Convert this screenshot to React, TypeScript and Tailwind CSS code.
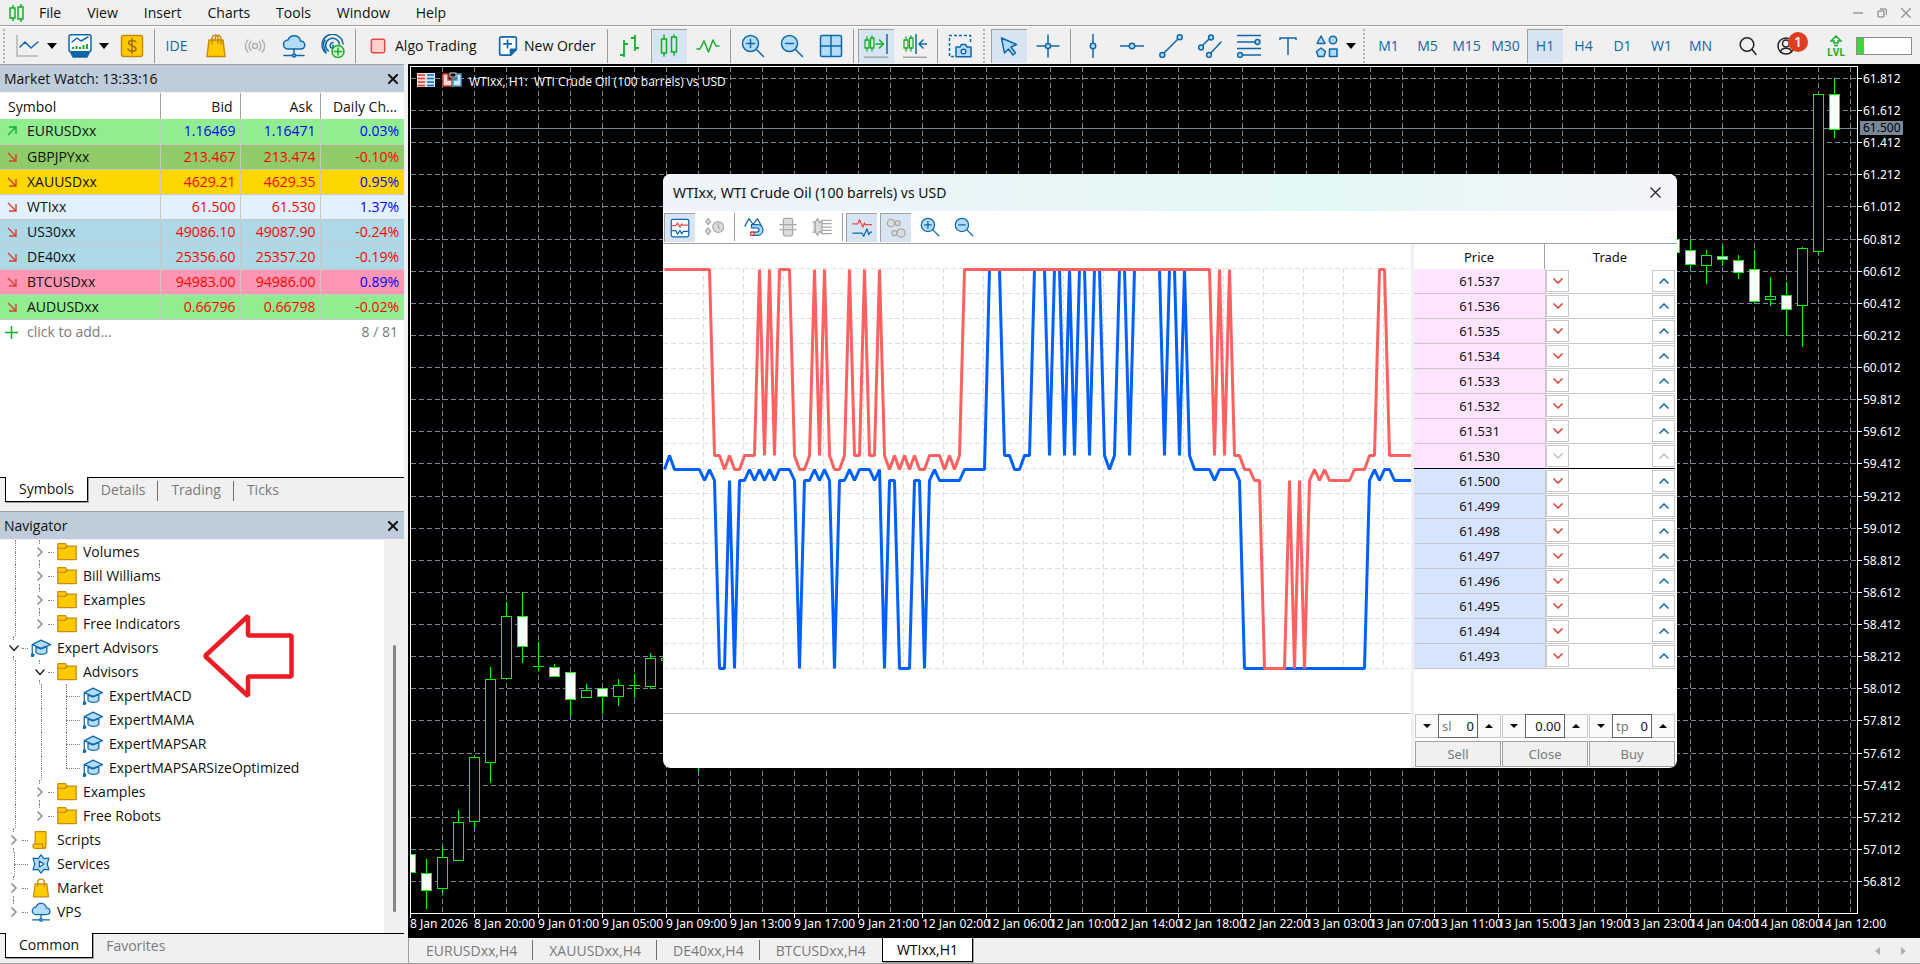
import { type ReactNode } from "react";
import { clsx } from "clsx";

const BLUE = "#0f67ab";
const SKY = "#b3dcfa";
const GREEN = "#12b028";
const GOLD = "#fdcb00";
const GOLD_EDGE = "#c98a0a";
const GRAY = "#a8a8a8";
const LIME = "#00ff00";

const MENU = ["File", "View", "Insert", "Charts", "Tools", "Window", "Help"];

const QUOTES = [
  { symbol: "EURUSDxx", bid: "1.16469", ask: "1.16471", change: "0.03%", up: true, bg: "bg-[#90ee90]" },
  { symbol: "GBPJPYxx", bid: "213.467", ask: "213.474", change: "-0.10%", up: false, bg: "bg-[#8fcb66]" },
  { symbol: "XAUUSDxx", bid: "4629.21", ask: "4629.35", change: "0.95%", up: false, bg: "bg-[#ffd700]" },
  { symbol: "WTIxx", bid: "61.500", ask: "61.530", change: "1.37%", up: false, bg: "bg-[#e1f1ff]" },
  { symbol: "US30xx", bid: "49086.10", ask: "49087.90", change: "-0.24%", up: false, bg: "bg-[#add8e6]" },
  { symbol: "DE40xx", bid: "25356.60", ask: "25357.20", change: "-0.19%", up: false, bg: "bg-[#add8e6]" },
  { symbol: "BTCUSDxx", bid: "94983.00", ask: "94986.00", change: "0.89%", up: false, bg: "bg-[#ff96b4]" },
  { symbol: "AUDUSDxx", bid: "0.66796", ask: "0.66798", change: "-0.02%", up: false, bg: "bg-[#90ee90]" },
];

type Branch = "line" | "tee" | "end" | "closed" | "closedEnd" | "open";
type TreeIcon = "folder" | "expert" | "script" | "service" | "market" | "vps";

const TREE: { label: string; icon: TreeIcon; cells: Branch[] }[] = [
  { label: "Volumes", icon: "folder", cells: ["line", "closed"] },
  { label: "Bill Williams", icon: "folder", cells: ["line", "closed"] },
  { label: "Examples", icon: "folder", cells: ["line", "closed"] },
  { label: "Free Indicators", icon: "folder", cells: ["line", "closedEnd"] },
  { label: "Expert Advisors", icon: "expert", cells: ["open"] },
  { label: "Advisors", icon: "folder", cells: ["line", "open"] },
  { label: "ExpertMACD", icon: "expert", cells: ["line", "line", "tee"] },
  { label: "ExpertMAMA", icon: "expert", cells: ["line", "line", "tee"] },
  { label: "ExpertMAPSAR", icon: "expert", cells: ["line", "line", "tee"] },
  { label: "ExpertMAPSARSizeOptimized", icon: "expert", cells: ["line", "line", "end"] },
  { label: "Examples", icon: "folder", cells: ["line", "closed"] },
  { label: "Free Robots", icon: "folder", cells: ["line", "closedEnd"] },
  { label: "Scripts", icon: "script", cells: ["closed"] },
  { label: "Services", icon: "service", cells: ["tee"] },
  { label: "Market", icon: "market", cells: ["closed"] },
  { label: "VPS", icon: "vps", cells: ["closedEnd"] },
];

const TIMES = [
  "8 Jan 2026", "8 Jan 20:00", "9 Jan 01:00", "9 Jan 05:00", "9 Jan 09:00", "9 Jan 13:00",
  "9 Jan 17:00", "9 Jan 21:00", "12 Jan 02:00", "12 Jan 06:00", "12 Jan 10:00", "12 Jan 14:00",
  "12 Jan 18:00", "12 Jan 22:00", "13 Jan 03:00", "13 Jan 07:00", "13 Jan 11:00", "13 Jan 15:00",
  "13 Jan 19:00", "13 Jan 23:00", "14 Jan 04:00", "14 Jan 08:00", "14 Jan 12:00",
];

// x, high, body top, body bottom, low, bearish
const CANDLES: [number, number, number, number, number, boolean][] = [
  [410, 854, 854, 872, 872, true],
  [426, 859, 873, 890, 908, true],
  [442, 846, 857, 888, 892, false],
  [458, 810, 822, 860, 860, false],
  [474, 757, 757, 821, 827, false],
  [490, 667, 679, 762, 782, false],
  [506, 602, 616, 678, 678, false],
  [522, 592, 616, 646, 662, true],
  [538, 642, 666, 666, 670, false],
  [554, 664, 667, 676, 676, true],
  [570, 672, 672, 699, 715, true],
  [586, 684, 690, 697, 697, false],
  [602, 688, 688, 696, 713, true],
  [618, 679, 685, 696, 705, false],
  [634, 674, 685, 685, 697, false],
  [650, 653, 658, 686, 688, false],
  [666, 658, 658, 660, 662, false],
  [698, 700, 720, 740, 770, false],
  [1674, 236, 239, 252, 252, true],
  [1690, 240, 250, 264, 267, true],
  [1706, 250, 255, 265, 283, false],
  [1722, 245, 256, 259, 265, true],
  [1738, 255, 260, 272, 278, true],
  [1754, 250, 269, 301, 303, true],
  [1770, 277, 296, 299, 305, false],
  [1786, 282, 295, 309, 334, true],
  [1802, 247, 248, 305, 346, false],
  [1818, 94, 94, 251, 253, false],
  [1834, 78, 94, 129, 137, true],
];

// Tick history packed as level + repeat count, one step per tick
const ASK_TICKS =
  "A10 B2 C B C2 B3 A B A B A3 B C2 B A B A B C2 B A B2 A B2 A B C B C B C B C2 B3 C B C B A50 B A B A B2 C2 D2 E5 D E D E D C D C D5 C3 B2 A2 B6";
const BID_TICKS =
  "C B C6 D C D E2 D E D2 C D C D C D C3 D E D2 C D C D E D2 C D C3 D C E D2 E3 D2 E D C D5 C5 A3 B2 C2 B2 A3 B A2 B A B A2 B A2 B C B A2 B A6 B A2 B A B C4 D C4 D E25 D C D C2 D5";
const LEVELS: Record<string, number> = { A: 25.5, B: 211.5, C: 225.5, D: 236.5, E: 424.5 };

const LADDER = [
  "61.537", "61.536", "61.535", "61.534", "61.533", "61.532", "61.531", "61.530",
  "61.500", "61.499", "61.498", "61.497", "61.496", "61.495", "61.494", "61.493",
];

function tickPoints(packed: string) {
  const levels = packed.split(" ").flatMap((run) => Array(Number(run.slice(1) || 1)).fill(run[0]) as string[]);
  return levels.map((level, i) => `${1.5 + i * 5},${LEVELS[level]}`).join(" ");
}

function Icon({ size = 24, children }: { size?: 16 | 20 | 24; children: ReactNode }) {
  return (
    <svg
      viewBox="0 0 24 24"
      aria-hidden="true"
      className={clsx("shrink-0", size === 24 && "size-6", size === 20 && "size-5", size === 16 && "size-4")}
      fill="none"
      stroke={BLUE}
      strokeWidth="1.5"
      strokeLinecap="round"
      strokeLinejoin="round"
    >
      {children}
    </svg>
  );
}

const candlePair = (
  <g stroke={GREEN}>
    <path d="M7 1v4M7 19v3M17 1v2M17 18v3" />
    <rect x="4.500" y="5" width="5" height="14" />
    <rect x="14.500" y="3" width="5" height="15" />
  </g>
);

const smallCandles = (
  <g stroke={GREEN} strokeWidth="1.300">
    <path d="M3 3v3M3 14v3M8 2v2M8 14v3" />
    <rect x="1" y="6" width="4" height="8" />
    <rect x="6.500" y="4" width="3.500" height="10" />
  </g>
);

const ICONS = {
  lineChart: (
    <>
      <path d="M1 1v21h21" stroke="#b4b4b4" strokeLinecap="butt" />
      <path d="M4 13l5-5 6 6 7-6" />
    </>
  ),
  monitor: (
    <>
      <rect x="1" y="0.800" width="22" height="17" rx="2" fill="#fff" />
      <path d="M2.500 18l2.500 5h14l2.500-5z" fill={BLUE} />
      <path d="M4 8l5-4 4 3 7-4" />
      <path d="M5 15v-2M8.500 15v-3M12 15v-2M15.500 15v-4M19 15v-5" stroke={GREEN} strokeWidth="2" strokeLinecap="butt" />
    </>
  ),
  dollar: (
    <>
      <rect x="1.500" y="1.500" width="21" height="21" rx="2" fill={GOLD} stroke={GOLD_EDGE} />
      <path d="M16 8c-1-2-7-2.500-7.500 0.500S16 11.500 16 15s-7 2.500-8 0M12 4.500v15" stroke="#a06c00" />
    </>
  ),
  bag: (
    <g stroke={GOLD_EDGE}>
      <path d="M5 6h14l2 16.500H3z" fill={GOLD} />
      <path d="M8 10V5c0-5 6-5 6-1v5M11 6c0-6 6-6 6-1v5" />
    </g>
  ),
  radio: (
    <g stroke="#b0b0b0">
      <circle cx="12" cy="12" r="2.500" />
      <path d="M8 7.500c-2.500 2-2.500 7 0 9M16 7.500c2.500 2 2.500 7 0 9M5 6c-3.500 3-3.500 9 0 12M19 6c3.500 3 3.500 9 0 12" />
    </g>
  ),
  cloud: (
    <>
      <path d="M6 15a4.500 4.500 0 0 1 0-9 6.500 6.500 0 0 1 12.500 1A4 4 0 0 1 19 15z" fill={SKY} />
      <path d="M12 15v5M2 21.500h20" />
      <circle cx="12" cy="21.500" r="1.500" fill={SKY} />
    </>
  ),
  globe: (
    <>
      <path d="M5 19A10.500 10.500 0 1 1 22 10M7.500 17a7 7 0 1 1 11-7M12 8.500a3 3 0 0 0-1.500 5.500M12 11v4" />
      <path d="M4 6c-3 5-1 9 1 12" />
      <circle cx="17" cy="17.500" r="6" fill="#d8f5d8" stroke={GREEN} />
      <path d="M17 14v7M13.500 17.500h7" stroke={GREEN} />
    </>
  ),
  algo: <rect x="2" y="2" width="20" height="20" rx="2.500" fill="#ffd2cc" stroke="#de4a40" strokeWidth="2.200" />,
  newOrder: (
    <g strokeWidth="2">
      <path d="M4 1h16a2 2 0 0 1 2 2v13l-7 7H4a2 2 0 0 1-2-2V3a2 2 0 0 1 2-2z" fill="#fff" />
      <path d="M22 16h-7v7z" fill={BLUE} />
      <path d="M11.500 5v9M7 9.500h9" />
    </g>
  ),
  bars: <path d="M6 6v17M2 21h4M6 10h4M17 1v16M13 4h4M17 14h4" stroke={GREEN} strokeLinecap="butt" strokeWidth="1.800" />,
  candles: candlePair,
  zigzag: <path d="M1 15h3l4-8 4.500 11 4.500-12 3 6h3" stroke={GREEN} />,
  zoomIn: (
    <>
      <circle cx="9.500" cy="9.500" r="8" fill={SKY} />
      <path d="M15.500 15.500l7 7M5.500 9.500h8M9.500 5.500v8" />
    </>
  ),
  zoomOut: (
    <>
      <circle cx="9.500" cy="9.500" r="8" fill={SKY} />
      <path d="M15.500 15.500l7 7M5.500 9.500h8" />
    </>
  ),
  tiles: (
    <>
      <rect x="1.500" y="1.500" width="21" height="21" rx="1.500" fill={SKY} />
      <path d="M12 1.500v21M1.500 12h21" />
    </>
  ),
  autoScroll: (
    <>
      {smallCandles}
      <path d="M12 10h7M15.500 6l4 4-4 4" stroke={GREEN} />
      <path d="M23 0v20" strokeLinecap="butt" />
      <path d="M0 23.200h24" stroke={GRAY} />
    </>
  ),
  shift: (
    <>
      {smallCandles}
      <path d="M13 0v20" strokeLinecap="butt" />
      <path d="M24 10h-7M20 6l-4 4 4 4" />
      <path d="M0 23.200h24" stroke={GRAY} />
    </>
  ),
  camera: (
    <>
      <path d="M6 22.500H1.500v-21h21V8" strokeDasharray="3 2" strokeLinecap="butt" />
      <path d="M8 13h4l1.500-2.500h4L19 13h4v9.800H8z" fill={SKY} />
      <circle cx="15.500" cy="17.500" r="2.300" fill="#fff" />
    </>
  ),
  cursor: <path d="M4.500 4l15 6.500-5.500 2.500 4.500 6-2.500 2-4.500-6-4 4z" fill={SKY} />,
  crosshair: (
    <>
      <path d="M12 1v8.500M12 14.500V23M1 12h8.500M14.500 12H23" />
      <circle cx="12" cy="12" r="2.500" fill={SKY} />
    </>
  ),
  vline: (
    <>
      <path d="M12 0v24" />
      <circle cx="12" cy="12" r="2.700" fill={SKY} />
    </>
  ),
  hline: (
    <>
      <path d="M0 12h24" />
      <circle cx="12" cy="12" r="2.700" fill={SKY} />
    </>
  ),
  trend: (
    <>
      <path d="M5 19L19 5" />
      <circle cx="3.300" cy="21" r="2.500" fill={SKY} />
      <circle cx="20.700" cy="3.300" r="2.500" fill={SKY} />
    </>
  ),
  channel: (
    <>
      <path d="M4 12l8-8M12 20L23 8" />
      <circle cx="3" cy="13.500" r="2.400" fill={SKY} />
      <circle cx="13" cy="3.500" r="2.400" fill={SKY} />
      <circle cx="11" cy="21" r="2.400" fill={SKY} />
    </>
  ),
  fibo: (
    <>
      <path d="M0 1.500h24M0 8h18M0 14.500h24M5 21h19" />
      <circle cx="20.500" cy="8" r="2.400" fill={SKY} />
      <circle cx="3" cy="21" r="2.400" fill={SKY} />
    </>
  ),
  text: <path d="M4 6V4h16v2M12 4v17" strokeLinecap="butt" />,
  shapes: (
    <>
      <path d="M6 2l4 7.500H2z" fill={SKY} />
      <circle cx="18" cy="6" r="3.700" fill={SKY} />
      <path d="M6 14l4.500 3.500-1.700 5H3.200l-1.700-5z" fill={SKY} />
      <rect x="14.500" y="15" width="7.500" height="7.500" fill={SKY} />
    </>
  ),
  search: (
    <g stroke="#222" strokeWidth="1.500">
      <circle cx="11" cy="10.500" r="6.800" />
      <path d="M16 15.500l4 5" />
    </g>
  ),
  user: (
    <g stroke="#222" strokeWidth="1.500">
      <circle cx="11" cy="12" r="8" />
      <circle cx="11" cy="9.500" r="3.500" />
      <path d="M5.500 18c1-5 10-5 11 0" />
    </g>
  ),
  tickView: (
    <>
      <rect x="1.500" y="1.500" width="21" height="21" rx="2" fill="#fff" />
      <path d="M2 9h5l2-3 3 5 2-4 1 1.500h7" stroke="#f04848" />
      <path d="M2 15h5l2 4.500 3-4.500 2 4 2-3h6" />
    </>
  ),
  clock: (
    <g stroke={GRAY} fill="#dcdcdc">
      <path d="M5 2l3 3.500-3 3.500-3-3.500zM5 13l3 4-3 4-3-4z" />
      <circle cx="17" cy="12" r="6.500" />
      <path d="M17 8v4l2 2" />
    </g>
  ),
  magnet: (
    <>
      <path d="M1 11l5-9 5 7 5-7 5 9" />
      <path d="M9 9h7c9 0 9 13 0 13H9v-4h6c4 0 4-5 0-5H9z" fill={SKY} />
      <rect x="8" y="18" width="4" height="4" fill="#fff" stroke="#d33" />
    </>
  ),
  depth: (
    <g stroke={GRAY}>
      <rect x="6.500" y="1.500" width="11" height="21" rx="2" fill="#dcdcdc" />
      <path d="M2 9h20M2 15h20" />
    </g>
  ),
  volume: (
    <g stroke={GRAY}>
      <path d="M1 6h3l2.500-4 3 5 2.500-3v16l-2.500-3-3 5L4 18H1M4 6v12" fill="#dcdcdc" />
      <path d="M12 4h11M12 8h11M12 12h11M12 16h11M12 20h11" />
    </g>
  ),
  spread: (
    <>
      <path d="M1 7h6l2-5 4 9 2-5 1 2h8" stroke="#f04848" />
      <path d="M1 18h11l2 4 4-9 2 7 2-3h2" />
    </>
  ),
  bubbles: (
    <g stroke={GRAY} fill="#dcdcdc">
      <circle cx="6" cy="6" r="4.500" />
      <circle cx="14" cy="6" r="3" />
      <circle cx="10" cy="18" r="3" />
      <circle cx="18" cy="18" r="5" />
    </g>
  ),
};

type IconName = keyof typeof ICONS;

const TREE_ICONS: Record<TreeIcon, ReactNode> = {
  folder: (
    <g stroke={GOLD_EDGE}>
      <path d="M1 2h9l2 3h11v16H1z" fill={GOLD} />
      <path d="M2 7.500h8l2-2.500" />
    </g>
  ),
  expert: (
    <>
      <path d="M12 2.500L23.500 8 12 12.500 1.500 8z" fill={SKY} />
      <path d="M6 11v6.500c3 3 10 3 13 0V10.500l-7 2.500z" fill={SKY} />
      <path d="M1.500 8v11" />
      <circle cx="1.800" cy="20.500" r="1.600" fill={BLUE} />
    </>
  ),
  script: (
    <g stroke={GOLD_EDGE} fill={GOLD}>
      <path d="M5 2h13v17c0 4-5 4-5 0H5z" />
      <path d="M3 17h11c-1 5 3 5 3 5H5c-3 0-3-4-2-5z" />
    </g>
  ),
  service: (
    <>
      <path d="M12 1l3.500 4.500 6-0.500-2 7 2 7-6-0.500L12 23l-3.500-4.500-6 0.500 2-7-2-7 6 0.500z" fill={SKY} />
      <path d="M10 8.500l5.500 3.500-5.500 3.500z" fill="#fff" />
    </>
  ),
  market: (
    <g stroke={GOLD_EDGE}>
      <path d="M5 7h14l2 15.500H3z" fill={GOLD} />
      <path d="M8 10V5c0-5 8-5 8 0v5" />
    </g>
  ),
  vps: ICONS.cloud,
};

function Separator() {
  return <div className="flex h-[34px] w-[6px] shrink-0 justify-center"><span className="w-px bg-[#9a9a9a]" /></div>;
}

function Grip({ className = "mx-1" }: { className?: string }) {
  return <div className={clsx("h-[34px] w-0 shrink-0 border-l-2 border-dotted border-[#b4b4b4]", className)} />;
}

function ToolButton({ icon, label, active, children }: { icon?: IconName; label: string; active?: boolean; children?: ReactNode }) {
  return (
    <div className="flex w-[39px] shrink-0 justify-center">
      <button
        aria-label={label}
        className={clsx(
          "flex h-[34px] w-9 items-center justify-center",
          active && "border-t border-l border-[#a0a0a0] bg-[#d7e4f2] hover:bg-[#cddded]"
        )}
      >
        {icon ? <Icon>{ICONS[icon]}</Icon> : children}
      </button>
    </div>
  );
}

function DropArrow() {
  return (
    <div className="flex w-[13px] shrink-0">
      <svg viewBox="0 0 10 6" aria-hidden="true" className="h-[6px] w-[10px]">
        <path d="M0 0h10L5 6z" fill="#000" />
      </svg>
    </div>
  );
}

function MenuBar() {
  return (
    <header className="flex h-[26px] shrink-0 items-center border-b border-[#a0a0a0] pr-[9px] pl-2">
      <svg viewBox="0 0 17 18" aria-hidden="true" className="mr-px h-[18px] w-[17px]" fill="#dff5df" stroke={GREEN} strokeWidth="1.500">
        <path d="M5 1v3M5 14v3M13 0v3M13 15v3" />
        <rect x="2" y="4" width="5" height="10" />
        <rect x="10" y="3" width="5" height="12" />
      </svg>
      <nav className="flex">
        {MENU.map((item) => (
          <button key={item} className="px-[13px]">{item}</button>
        ))}
      </nav>
      <div className="ml-auto flex items-center gap-[14px]">
        <button aria-label="Minimize"><svg viewBox="0 0 10 10" className="size-[10px]" stroke="#9a9a9a" strokeWidth="1.500"><path d="M0 5h10" /></svg></button>
        <button aria-label="Restore">
          <svg viewBox="0 0 10 10" className="size-[10px]" fill="none" stroke="#9a9a9a" strokeWidth="1.500">
            <rect x="1" y="3" width="6" height="6" rx="1" />
            <path d="M3 1h4.500a2 2 0 0 1 2 2v4" />
          </svg>
        </button>
        <button aria-label="Close"><svg viewBox="0 0 10 10" className="size-[10px]" stroke="#9a9a9a" strokeWidth="1.500"><path d="M0 0l10 10M10 0L0 10" /></svg></button>
      </div>
    </header>
  );
}

const FRAMES = ["M1", "M5", "M15", "M30", "H1", "H4", "D1", "W1", "MN"];

function Toolbar() {
  return (
    <div className="flex h-[38px] shrink-0 items-center overflow-hidden border-t border-white">
      <Grip className="mx-[3px]" />
      <ToolButton icon="lineChart" label="Line chart" />
      <DropArrow />
      <ToolButton icon="monitor" label="Chart templates" />
      <DropArrow />
      <ToolButton icon="dollar" label="Symbols" />
      <Separator />
      <ToolButton label="MetaEditor"><span className="text-[#0f67ab]">IDE</span></ToolButton>
      <ToolButton icon="bag" label="Market" />
      <ToolButton icon="radio" label="Signals" />
      <ToolButton icon="cloud" label="VPS" />
      <ToolButton icon="globe" label="Community" />
      <Separator />
      <button className="flex w-[132px] shrink-0 items-center gap-[9px] pl-3 whitespace-nowrap"><Icon size={16}>{ICONS.algo}</Icon>Algo Trading</button>
      <button className="flex w-[114px] shrink-0 items-center gap-[6px] pl-2 whitespace-nowrap"><Icon size={20}>{ICONS.newOrder}</Icon>New Order</button>
      <Separator />
      <ToolButton icon="bars" label="Bar chart" />
      <ToolButton icon="candles" label="Candlesticks" active />
      <ToolButton icon="zigzag" label="Line" />
      <Separator />
      <ToolButton icon="zoomIn" label="Zoom in" />
      <ToolButton icon="zoomOut" label="Zoom out" />
      <ToolButton icon="tiles" label="Tile windows" />
      <Separator />
      <ToolButton icon="autoScroll" label="Auto scroll" active />
      <ToolButton icon="shift" label="Chart shift" />
      <Separator />
      <ToolButton icon="camera" label="Screenshot" />
      <Grip />
      <ToolButton icon="cursor" label="Cursor" active />
      <ToolButton icon="crosshair" label="Crosshair" />
      <Separator />
      <ToolButton icon="vline" label="Vertical line" />
      <ToolButton icon="hline" label="Horizontal line" />
      <ToolButton icon="trend" label="Trendline" />
      <ToolButton icon="channel" label="Channel" />
      <ToolButton icon="fibo" label="Fibonacci" />
      <ToolButton icon="text" label="Text" />
      <ToolButton icon="shapes" label="Shapes" />
      <DropArrow />
      <Grip />
      {FRAMES.map((frame) => (
        <ToolButton key={frame} label={frame} active={frame === "H1"}>
          <span className="text-[#0f67ab]">{frame}</span>
        </ToolButton>
      ))}
      <div className="ml-auto flex shrink-0 items-center pr-2">
        <ToolButton icon="search" label="Search" />
        <div className="relative mr-5">
          <ToolButton icon="user" label="Notifications" />
          <span className="absolute top-[3px] left-[21px] flex size-5 items-center justify-center rounded-full bg-[#e03c20] text-[14px] font-semibold text-white">1</span>
        </div>
        <div className="mr-[10px] flex w-5 flex-col items-center text-[10px] leading-[10px] font-bold text-[#12b028]">
          <svg viewBox="0 0 12 12" aria-hidden="true" className="size-3" fill="none" stroke={GREEN} strokeWidth="1.500">
            <path d="M6 1l5 5H8v2H4V6H1zM4 10.500h4" />
          </svg>
          LVL
        </div>
        <div className="h-[18px] w-14 border border-[#8c8c8c] bg-white"><div className="h-full w-[7px] bg-[#3ad83a]" /></div>
      </div>
    </div>
  );
}

function PanelTitle({ children }: { children: ReactNode }) {
  return (
    <div className="flex h-7 shrink-0 items-center justify-between border-t border-[#a0a0a0] bg-[#bfcddb] pr-[6px] pl-1">
      <h2>{children}</h2>
      <button aria-label="Close panel">
        <svg viewBox="0 0 10 10" className="size-[10px]" stroke="#111" strokeWidth="2"><path d="M0 0l10 10M10 0L0 10" /></svg>
      </button>
    </div>
  );
}

function PanelTabs({ tabs }: { tabs: string[] }) {
  return (
    <div className="relative flex h-[26px] shrink-0">
      <div className="absolute inset-x-0 top-0 h-px bg-black" />
      {tabs.map((tab, i) => (
        <button
          key={tab}
          className={clsx(
            "relative h-[25px] px-[13px]",
            i === 0 && "ml-[5px] border border-t-0 border-black bg-white shadow-[1px_1px_0_#a0a0a0]",
            i > 0 && "text-[#7a7a7a]"
          )}
        >
          {tab}
          {i > 0 && i < tabs.length - 1 && <span className="absolute top-1 right-0 h-5 w-px bg-[#6e6e6e]" />}
        </button>
      ))}
    </div>
  );
}

function MarketWatch() {
  return (
    <section className="flex h-[447px] shrink-0 flex-col">
      <PanelTitle>Market Watch: 13:33:16</PanelTitle>
      <div className="mt-px flex-1 bg-white">
        <table className="w-full table-fixed border-collapse">
          <colgroup><col className="w-[160px]" /><col className="w-20" /><col className="w-20" /><col /></colgroup>
          <thead>
            <tr className="h-[26px]">
              <th className="border-r border-[#a0a0a0] pt-px pl-2 text-left font-normal">Symbol</th>
              <th className="border-r border-[#a0a0a0] pt-px pr-[7px] text-right font-normal">Bid</th>
              <th className="border-r border-[#a0a0a0] pt-px pr-[7px] text-right font-normal">Ask</th>
              <th className="pt-px pr-[7px] text-right font-normal whitespace-nowrap">Daily Ch...</th>
            </tr>
          </thead>
          <tbody>
            {QUOTES.map((q) => (
              <tr key={q.symbol} className={clsx("h-[25px] border-b border-[#c8c8c8]", q.bg)}>
                <td className="border-r border-[#c8c8c8]">
                  <div className="flex items-center gap-[10px] pl-[7px]">
                    <svg viewBox="0 0 10 10" aria-hidden="true" className="size-[10px]" fill="none" stroke={q.up ? GREEN : "#dc3c32"} strokeWidth="1.400">
                      {q.up ? <path d="M1 9l8-8M2 1h7v7" /> : <path d="M1 1l8 8M9 2v7H2" />}
                    </svg>
                    {q.symbol}
                  </div>
                </td>
                <td className={clsx("border-r border-[#c8c8c8] pr-1 text-right", q.up ? "text-[#0000ff]" : "text-[#ff0000]")}>{q.bid}</td>
                <td className={clsx("border-r border-[#c8c8c8] pr-1 text-right", q.up ? "text-[#0000ff]" : "text-[#ff0000]")}>{q.ask}</td>
                <td className={clsx("pr-[5px] text-right", q.change[0] === "-" ? "text-[#ff0000]" : "text-[#0000ff]")}>{q.change}</td>
              </tr>
            ))}
          </tbody>
        </table>
        <div className="flex h-[25px] items-center justify-between pr-[6px] text-[#7a7a7a]">
          <button className="flex items-center gap-[9px] pl-[5px]">
            <svg viewBox="0 0 13 13" aria-hidden="true" className="size-[13px]" stroke={GREEN} strokeWidth="1.500"><path d="M6.500 0v13M0 6.500h13" /></svg>
            click to add...
          </button>
          <span>8 / 81</span>
        </div>
      </div>
      <PanelTabs tabs={["Symbols", "Details", "Trading", "Ticks"]} />
      <div className="h-2 shrink-0" />
    </section>
  );
}

function TreeCell({ kind }: { kind: Branch }) {
  const hasChevron = kind === "closed" || kind === "closedEnd" || kind === "open";
  return (
    <span className="flex h-6 w-[26px] shrink-0 items-center">
      <span className="flex h-6 w-[26px] flex-col items-center">
        <span className="w-0 flex-1 border-l border-dotted border-[#808080]" />
        {hasChevron && (
          <svg viewBox="0 0 10 16" aria-hidden="true" className="h-4 w-[10px]" fill="none" stroke={kind === "open" ? "#222" : "#8c8c8c"} strokeWidth="1.500">
            {kind === "open" ? <path d="M0.500 5.500L5 10.500l4.500-5" /> : <path d="M2.500 3.500L7 8l-4.500 4.500" />}
          </svg>
        )}
        <span className={clsx("w-0 flex-1", kind !== "end" && kind !== "closedEnd" && "border-l border-dotted border-[#808080]")} />
      </span>
      {kind !== "line" && (
        <span className={clsx("h-0 shrink-0 border-t border-dotted border-[#808080]", hasChevron ? "-ml-[3px] w-[6px]" : "-ml-3 w-[14px]")} />
      )}
    </span>
  );
}

function Navigator() {
  return (
    <section className="flex min-h-0 flex-1 flex-col">
      <PanelTitle>Navigator</PanelTitle>
      <div className="relative mt-px flex min-h-0 flex-1">
        <ul className="flex-1 overflow-hidden bg-white pl-[2px]">
          {TREE.map((node, i) => (
            <li key={i} className="flex h-6 items-center">
              {node.cells.map((kind, j) => <TreeCell key={j} kind={kind} />)}
              <span className="mr-[3px] flex w-[26px] justify-center"><Icon size={20}>{TREE_ICONS[node.icon]}</Icon></span>
              <span>{node.label}</span>
            </li>
          ))}
        </ul>
        <div className="flex w-5 items-end justify-center pb-[21px]">
          <div className="h-[267px] w-[3px] rounded-full bg-[#858585]" />
        </div>
        <svg viewBox="0 0 94 90" aria-hidden="true" className="absolute top-[71px] left-[201px] h-[90px] w-[94px]" fill="#fff" stroke="#ed1c24" strokeWidth="4.500">
          <path d="M4 45L47 5v19.500h43.500v41H47V85z" strokeLinejoin="bevel" />
        </svg>
      </div>
      <PanelTabs tabs={["Common", "Favorites"]} />
      <div className="h-1 shrink-0" />
    </section>
  );
}

function PriceChart() {
  const rows = Array.from({ length: 26 }, (_, i) => ({ y: Math.round(78 + i * 32.12) + 0.5, label: (61.812 - i * 0.2).toFixed(3) }));
  const cols = Array.from({ length: 45 }, (_, i) => 442.5 + i * 32);
  return (
    <svg viewBox="408 64 1512 874" preserveAspectRatio="xMinYMin slice" className="h-full w-full" shapeRendering="crispEdges" fontSize="12">
      <g stroke="#778899" strokeDasharray="5 3">
        {rows.slice(0, 25 + 1).map((r) => <path key={r.y} d={`M411 ${r.y}H1857`} />)}
        {cols.map((x) => <path key={x} d={`M${x} 67V912`} />)}
      </g>
      <path d="M411 128.500H1857" stroke="#778899" />
      {CANDLES.map(([x, high, top, bottom, low, bearish]) => (
        <g key={x} stroke={LIME}>
          <path d={`M${x + 0.5} ${high}V${top}M${x + 0.5} ${bottom}V${low + 1}`} />
          {top === bottom ? (
            <path d={`M${x - 5} ${top + 0.5}h11`} />
          ) : (
            <rect x={x - 4.5} y={top + 0.5} width="10" height={bottom - top} fill={bearish ? "#fff" : "#000"} />
          )}
        </g>
      ))}
      <rect x="408" y="66" width="2" height="850" fill="#000" />
      <path d="M410.500 913V66.500H1857.500V913.500H410" stroke="#fff" fill="none" />
      <g fill="#fff">
        {rows.map((r) => (
          <g key={r.y}>
            <path d={`M1858 ${r.y}h4`} stroke="#fff" />
            <text x="1863" y={r.y + 4}>{r.label}</text>
          </g>
        ))}
        {TIMES.map((time, i) => (
          <g key={time}>
            <path d={`M${410.5 + i * 64} 914v4`} stroke="#fff" />
            <text x={410 + i * 64} y="928">{time}</text>
          </g>
        ))}
        <text x="469" y="86" className="font-['Open_Sans',sans-serif]">WTIxx, H1:&#160; WTI Crude Oil (100 barrels) vs USD</text>
      </g>
      <rect x="1860" y="121" width="43" height="14" fill="#778899" />
      <text x="1863" y="132" fill="#000">61.500</text>
      <g shapeRendering="auto">
        <rect x="417" y="73" width="18" height="14" rx="1" fill="#fff" />
        <rect x="417" y="73" width="9" height="14" fill="#ffd9d5" />
        <rect x="426" y="73" width="9" height="14" fill="#cfe8fb" />
        <path d="M418 75h7M418 78.500h7M418 82h7M418 85.500h7" stroke="#dc3c32" strokeWidth="1.600" />
        <path d="M427 75h7M427 78.500h7M427 82h7M427 85.500h7" stroke={BLUE} strokeWidth="1.600" />
        <path d="M443 74h5v6h4v6h-9z" fill="#ffd9d5" stroke="#dc3c32" strokeWidth="1.500" />
        <path d="M461 74h-4v6h-4v6h8z" fill="#cfe8fb" stroke="#4a96d0" strokeWidth="1.500" />
        <rect x="450" y="73" width="6" height="4" fill="#111" stroke="#ddd" />
      </g>
    </svg>
  );
}

function TickChart() {
  return (
    <svg viewBox="0 0 748 524" preserveAspectRatio="none" aria-hidden="true" className="h-full w-full" fill="none">
      <g stroke="#dedede" strokeDasharray="5 3" shapeRendering="crispEdges">
        {Array.from({ length: 17 }, (_, i) => <path key={i} d={`M0 ${24.5 + i * 25}H746`} />)}
        {Array.from({ length: 18 }, (_, i) => <path key={i} d={`M${40.5 + i * 40} 24V424`} />)}
      </g>
      <g strokeWidth="3" strokeLinejoin="bevel">
        <polyline points={tickPoints(BID_TICKS)} stroke="#0060ff" />
        <polyline points={tickPoints(ASK_TICKS)} stroke="#ff6060" />
      </g>
      <path d="M0 469.500h748" stroke="#c0c0c0" />
    </svg>
  );
}

function LadderButton({ direction, disabled, price }: { direction: "up" | "down"; disabled: boolean; price: string }) {
  return (
    <button
      disabled={disabled}
      aria-label={`${direction === "up" ? "Buy" : "Sell"} at ${price}`}
      className="flex h-[22px] w-[23px] items-center justify-center border border-[#c8c8c8] bg-white"
    >
      <svg viewBox="0 0 10 6" className="h-[6px] w-[10px]" fill="none" stroke={disabled ? "#c0c0c0" : direction === "up" ? BLUE : "#dc3c32"} strokeWidth="1.500">
        {direction === "up" ? <path d="M0.500 5.500L5 1l4.500 4.500" /> : <path d="M0.500 0.500L5 5l4.500-4.500" />}
      </svg>
    </button>
  );
}

function Stepper({ hint, value, label }: { hint?: string; value: string; label: string }) {
  const arrow = "flex w-[22px] shrink-0 items-center justify-center bg-[#fafafa]";
  return (
    <div className="flex h-6 flex-1 border border-[#c8c8c8]">
      <button aria-label={`Decrease ${label}`} className={arrow}>
        <svg viewBox="0 0 8 4" className="h-1 w-2"><path d="M0 0h8L4 4z" /></svg>
      </button>
      <label className="-my-px flex min-w-0 flex-1 items-center border border-[#646464] bg-white px-[3px]">
        <span className="text-[#7a7a7a]">{hint}</span>
        <input aria-label={label} defaultValue={value} className="w-full min-w-0 bg-transparent text-right outline-none" />
      </label>
      <button aria-label={`Increase ${label}`} className={arrow}>
        <svg viewBox="0 0 8 4" className="h-1 w-2"><path d="M0 4h8L4 0z" /></svg>
      </button>
    </div>
  );
}

function PopupButton({ icon, label, active }: { icon: IconName; label: string; active?: boolean }) {
  return (
    <div className="w-[34px] pl-px">
      <button
        aria-label={label}
        className={clsx("flex h-[29px] w-[31px] items-center justify-center", active && "border-t border-l border-[#a0a0a0] bg-[#d7e4f2]")}
      >
        <Icon size={20}>{ICONS[icon]}</Icon>
      </button>
    </div>
  );
}

function DepthOfMarket() {
  return (
    <div role="dialog" aria-label="Depth of Market" className="absolute top-[110px] left-[255px] flex h-[594px] w-[1014px] flex-col overflow-hidden rounded-lg bg-white">
      <div className="flex h-[37px] shrink-0 items-center justify-between bg-linear-to-r from-[#f0f3fa] via-[#e3f8f6] via-65% to-[#f4f4fa] pr-4 pl-[10px]">
        <h2>WTIxx, WTI Crude Oil (100 barrels) vs USD</h2>
        <button aria-label="Close">
          <svg viewBox="0 0 11 11" className="size-[11px]" stroke="#222" strokeWidth="1.200"><path d="M0.500 0.500l10 10M10.500 0.500l-10 10" /></svg>
        </button>
      </div>
      <div className="flex h-[33px] shrink-0 items-center border-b border-[#a0a0a0]">
        <PopupButton icon="tickView" label="Tick chart" active />
        <PopupButton icon="clock" label="Time and sales" />
        <div className="flex h-7 w-[6px] justify-center"><span className="w-px bg-[#9a9a9a]" /></div>
        <PopupButton icon="magnet" label="Snap" />
        <PopupButton icon="depth" label="Depth" />
        <PopupButton icon="volume" label="Volumes" />
        <div className="flex h-7 w-[6px] justify-center"><span className="w-px bg-[#9a9a9a]" /></div>
        <PopupButton icon="spread" label="Spread" active />
        <PopupButton icon="bubbles" label="Deals" active />
        <PopupButton icon="zoomIn" label="Zoom in" />
        <PopupButton icon="zoomOut" label="Zoom out" />
      </div>
      <div className="flex min-h-0 flex-1">
        <div className="min-w-0 flex-1"><TickChart /></div>
        <div className="flex w-[266px] shrink-0 flex-col border-l-[3px] border-[#f0f0f0] pr-[2px] text-[13px]">
          <table className="w-full table-fixed border-separate border-spacing-0">
            <colgroup><col className="w-[131px]" /><col className="w-[25px]" /><col /><col className="w-[23px]" /></colgroup>
            <thead>
              <tr className="h-[25px]">
                <th className="border-r border-[#a0a0a0] font-normal">Price</th>
                <th colSpan={3} className="font-normal">Trade</th>
              </tr>
            </thead>
            <tbody>
              {LADDER.map((price, i) => {
                const edge = i === 7 ? "border-b-black" : "border-b-[#c8c8c8]";
                return (
                  <tr key={price} className="h-[25px]">
                    <td className={clsx("border-b p-0 text-center", edge, i < 8 ? "bg-[#ffe4ff]" : "bg-[#d6e4ff]")}>{price}</td>
                    <td className={clsx("border-b border-l border-l-[#c8c8c8] p-0", edge)}>
                      <LadderButton direction="down" disabled={i === 7} price={price} />
                    </td>
                    <td className={clsx("border-b p-0", edge)} />
                    <td className={clsx("border-b p-0", edge)}>
                      <LadderButton direction="up" disabled={i === 7} price={price} />
                    </td>
                  </tr>
                );
              })}
            </tbody>
          </table>
          <div className="mt-auto flex gap-px pl-px">
            <Stepper hint="sl" value="0" label="Stop loss" />
            <Stepper value="0.00" label="Volume" />
            <Stepper hint="tp" value="0" label="Take profit" />
          </div>
          <div className="mt-[3px] mb-px flex gap-px pl-px text-[#7a7a7a]">
            {["Sell", "Close", "Buy"].map((action) => (
              <button key={action} className="h-[26px] flex-1 border border-[#a0a0a0] bg-[#f0f0f0]">{action}</button>
            ))}
          </div>
        </div>
      </div>
    </div>
  );
}

function ChartTabs() {
  return (
    <div className="flex h-[25px] shrink-0 border-l border-[#a0a0a0] pl-px text-[#7a7a7a]">
      {["EURUSDxx,H4", "XAUUSDxx,H4", "DE40xx,H4", "BTCUSDxx,H4"].map((tab, i) => (
        <button key={tab} className="relative px-4">
          {tab}
          {i < 3 && <span className="absolute top-[2px] right-0 h-5 w-px bg-[#6e6e6e]" />}
        </button>
      ))}
      <button className="h-6 border border-t-0 border-black bg-white px-[14px] text-black shadow-[1px_1px_0_#a0a0a0]">WTIxx,H1</button>
      <div className="ml-auto flex items-center gap-[21px] pr-[14px]">
        <button aria-label="Scroll left"><svg viewBox="0 0 5 8" className="h-2 w-[5px]"><path d="M5 0v8L0 4z" fill="#b0b0b0" /></svg></button>
        <button aria-label="Scroll right"><svg viewBox="0 0 5 8" className="h-2 w-[5px]"><path d="M0 0v8l5-4z" fill="#b0b0b0" /></svg></button>
      </div>
    </div>
  );
}

export default function App() {
  return (
    <div className="flex h-screen flex-col overflow-hidden border-b border-[#a0a0a0] bg-[#f0f0f0] font-['Open_Sans','Noto_Sans',sans-serif] text-[14px] leading-5 text-[#111]">
      <MenuBar />
      <Toolbar />
      <div className="flex min-h-0 flex-1">
        <aside className="mr-1 flex w-[404px] shrink-0 flex-col">
          <MarketWatch />
          <Navigator />
        </aside>
        <main className="flex min-w-0 flex-1 flex-col">
          <div className="relative min-h-0 flex-1 overflow-hidden bg-black font-['Noto_Sans','Open_Sans',sans-serif]">
            <PriceChart />
            <DepthOfMarket />
          </div>
          <ChartTabs />
        </main>
      </div>
    </div>
  );
}
